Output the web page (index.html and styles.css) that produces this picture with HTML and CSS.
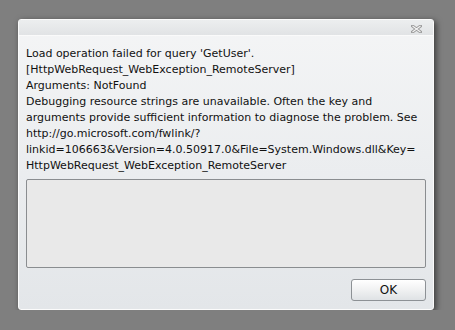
FILE: index.html
```html
<!DOCTYPE html>
<html lang="en">
  <head>
    <meta charset="utf-8" />
    <link rel="stylesheet" href="styles.css">
    <title>Error</title>
  </head>
  <body>
    <div class="dialog">
      <div class="titlebar">
        <svg class="close" width="11" height="8" viewBox="0 0 11 8">
          <path d="M1.5 1 L9.5 7 M9.5 1 L1.5 7" stroke="#9a9a9a" stroke-width="3" stroke-linecap="square" />
          <path d="M1.5 1 L9.5 7 M9.5 1 L1.5 7" stroke="#f4f4f4" stroke-width="1.1" />
        </svg>
      </div>
      <div class="content">
        <div class="message">
          Load operation failed for query 'GetUser'.<br />
          [HttpWebRequest_WebException_RemoteServer]<br />
          Arguments: NotFound<br />
          Debugging resource strings are unavailable. Often the key and<br />
          arguments provide sufficient information to diagnose the problem. See<br />
          http://go.microsoft.com/fwlink/?<br />
          linkid=106663&amp;Version=4.0.50917.0&amp;File=System.Windows.dll&amp;Key=<br />
          HttpWebRequest_WebException_RemoteServer
        </div>
        <div class="details"></div>
        <div class="actions">
          <button type="button" class="btn">OK</button>
        </div>
      </div>
    </div>
  </body>
</html>
```

FILE: styles.css
```css
body {
  margin: 0;
  background: #7f7f7f;
  padding: 19px 0 0 18px;
  font-family: "DejaVu Sans", sans-serif;
}
.dialog {
  width: 416px;
  height: 291px;
  box-sizing: border-box;
  border: 1px solid #fbfbfb;
  border-radius: 3px;
  background: linear-gradient(#f4f5f6, #e3e6e9);
  box-shadow: 2px 2px 6px rgba(0, 0, 0, 0.55);
  display: flex;
  flex-direction: column;
}
.titlebar {
  height: 15px;
  background: linear-gradient(#eceeef, #e1e3e5);
  border-bottom: 1px solid #fafafa;
  display: flex;
  justify-content: flex-end;
  align-items: center;
  padding-right: 11px;
}
.close {
  display: block;
  margin-top: 3px;
}
.content {
  padding: 10px 7px 0 7px;
  display: flex;
  flex-direction: column;
}
.message {
  font-size: 11px;
  line-height: 16px;
  color: #111;
  white-space: nowrap;
}
.details {
  margin-top: 5px;
  height: 89px;
  box-sizing: border-box;
  border: 1px solid #8a8d90;
  border-radius: 2px;
  background: #e9e9e9;
}
.actions {
  display: flex;
  justify-content: flex-end;
  margin-top: 11px;
}
.btn {
  width: 75px;
  height: 22px;
  border: 1px solid #8d9195;
  border-radius: 3px;
  background: linear-gradient(#ffffff, #f0f1f2 50%, #dfe2e5);
  font-family: "DejaVu Sans", sans-serif;
  font-size: 12px;
  color: #111;
  padding: 0;
}
```
